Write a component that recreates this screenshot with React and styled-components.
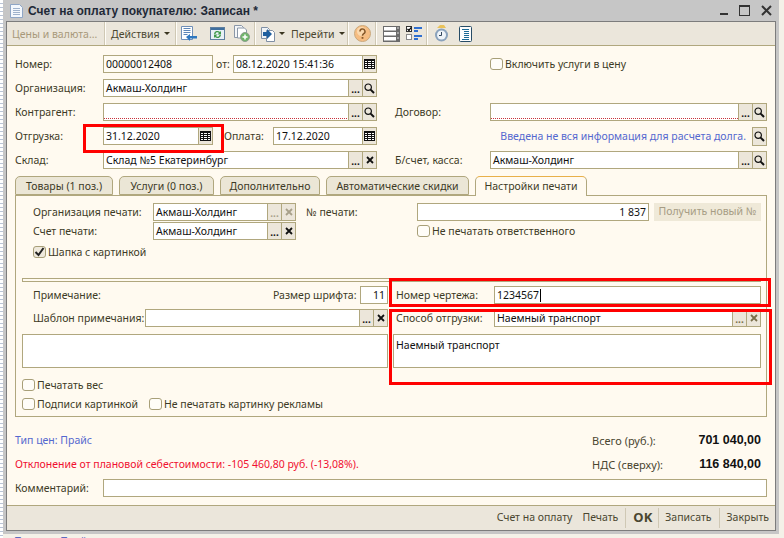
import React from "react";
import styled, { createGlobalStyle } from "styled-components";

const GlobalStyle = createGlobalStyle`
  html, body { margin: 0; padding: 0; background: #f4f1e8; }
  * { box-sizing: border-box; }
`;

const line = "#b0a77e";

const Screen = styled.div`
  width: 784px;
  height: 538px;
  overflow: hidden;
  padding-left: 3px;
  font-family: "Noto Sans", sans-serif;
  font-size: 10.5px;
  color: #3d3a26;
  background: repeating-linear-gradient(180deg, #fff 0 3px, #b9c4d6 3px 4px) 0 0 / 3px 100% no-repeat, #f4f1e8;
`;

const Window = styled.div`
  width: 776px;
  padding: 0 3px 3px;
  background: #c6c6c6;
`;

const TitleBar = styled.div`
  height: 21px;
  display: flex;
  align-items: center;
  padding: 0 3px 0 4px;
`;

const Title = styled.div`
  margin-left: 5px;
  font-family: "Liberation Sans", sans-serif;
  font-size: 12px;
  font-weight: 700;
  color: #1f2937;
`;

const WinControls = styled.div`
  margin-left: auto;
  display: flex;
  gap: 10px;
  align-items: center;
`;

const Content = styled.div`
  border: 1px solid #7c7c7c;
  background: #fffaf0;
`;

const Toolbar = styled.div`
  height: 24px;
  display: flex;
  align-items: center;
  background: #ebe6db;
  border-bottom: 1px solid ${line};
`;

const ToolGroup = styled.div`
  display: flex;
  align-items: center;
  flex: none;
  width: ${(p) => p.$w}px;
  height: 23px;
  padding-left: ${(p) => p.$pad || 6}px;
  gap: ${(p) => p.$gap || 0}px;
  border-right: 1px solid #cfc8b4;
  box-shadow: 1px 0 0 #fffdf8;
  &:last-child { border: 0; box-shadow: none; }
`;

const ToolGap = styled.span`
  flex: none;
  width: ${(p) => p.$w}px;
`;

const ToolText = styled.span`
  color: ${(p) => (p.$off ? "#a8997a" : "#4a4630")};
  white-space: nowrap;
`;

const Caret = styled.i`
  display: block;
  width: 0;
  height: 0;
  margin-left: ${(p) => p.$ml || 4}px;
  border: 3px solid transparent;
  border-top: 3px solid #3a3520;
  border-bottom: 0;
`;

const Form = styled.div`
  height: 459px;
  padding: 9px 8px 0;
`;

const Row = styled.div`
  position: relative;
  display: flex;
  align-items: center;
  height: ${(p) => p.$h || 18}px;
  margin-top: ${(p) => p.$mt ?? 6}px;
  &:first-child { margin-top: 0; }
`;

const Label = styled.span`
  flex: none;
  width: ${(p) => p.$w}px;
  padding-left: ${(p) => p.$pl || 0}px;
  margin-left: ${(p) => p.$ml || 0}px;
  white-space: nowrap;
`;

const RightGroup = styled.div`
  margin-left: auto;
  display: flex;
  align-items: center;
`;

const Field = styled.div`
  flex: none;
  display: flex;
  width: ${(p) => p.$w}px;
  height: 18px;
  margin-left: ${(p) => p.$ml || 0}px;
  border: 1px solid ${line};
  background: #fff;
`;

const FieldValue = styled.div`
  flex: 1;
  min-width: 0;
  padding: 0 2px;
  line-height: 16px;
  color: #111;
  white-space: nowrap;
  text-align: ${(p) => (p.$right ? "right" : "left")};
  background-color: ${(p) => (p.$cream ? "#fffcf4" : "#fff")};
  ${(p) =>
    p.$required &&
    `background-image: linear-gradient(90deg, #c8323c 50%, transparent 50%);
     background-size: 2px 1px;
     background-repeat: repeat-x;
     background-position: 0 calc(100% - 1px);`}
`;

const TextCaret = styled.i`
  display: inline-block;
  width: 1px;
  height: 13px;
  margin-left: 1px;
  vertical-align: -3px;
  background: #000;
`;

const FieldBtn = styled.div`
  flex: none;
  width: 14px;
  display: flex;
  align-items: center;
  justify-content: center;
  border-left: 1px solid ${line};
  background: #ece6da;
  color: ${(p) => p.$tone};
  font-weight: 700;
  font-size: 10px;
`;

const Dots = styled.span`
  line-height: 1;
  margin-top: 2px;
`;

const Tabs = styled.div`
  display: flex;
  gap: 6px;
  height: 19px;
  margin-top: 7px;
`;

const Tab = styled.div`
  flex: none;
  position: relative;
  z-index: ${(p) => (p.$active ? 1 : 0)};
  width: ${(p) => p.$w}px;
  height: ${(p) => (p.$active ? 20 : 19)}px;
  border: 1px solid ${line};
  border-bottom: ${(p) => (p.$active ? 0 : `1px solid ${line}`)};
  border-top-color: ${(p) => (p.$active ? "#e8b04a" : line)};
  border-radius: 5px 5px 0 0;
  background: ${(p) => (p.$active ? "#fffaf0" : "#ebe6d6")};
  text-align: center;
  line-height: 18px;
  white-space: nowrap;
`;

const Panel = styled.div`
  position: relative;
  height: 222px;
  border: 1px solid ${line};
  padding: 7px 5px 0 6px;
`;

const IndentRow = styled(Row)`
  padding-left: 11px;
`;

const GhostButton = styled.div`
  flex: none;
  width: 107px;
  height: 18px;
  margin-left: 5px;
  background: #efe9d8;
  color: #a69c84;
  text-align: center;
  line-height: 17px;
  white-space: nowrap;
`;

const Separator = styled.div`
  height: 4px;
  margin-top: ${(p) => p.$mt || 0}px;
  border: 1px solid ${line};
`;

const Check = styled.label`
  display: flex;
  align-items: center;
  flex: none;
  margin-left: ${(p) => p.$ml || 0}px;
  white-space: nowrap;
`;

const CheckBox = styled.span`
  flex: none;
  display: flex;
  align-items: center;
  justify-content: center;
  width: 13px;
  height: 12px;
  margin-right: 2px;
  border: 1px solid #a89f78;
  border-radius: 3px;
  background: ${(p) => (p.$on ? "#efe9dc" : "#fffdf8")};
`;

const TextArea = styled.div`
  flex: none;
  width: ${(p) => p.$w}px;
  height: 34px;
  margin-left: ${(p) => p.$ml || 0}px;
  padding: 3px 2px;
  border: 1px solid ${line};
  background: #fff;
  color: #111;
`;

const Marker = styled.div`
  position: absolute;
  left: ${(p) => p.$l}px;
  top: ${(p) => p.$t}px;
  width: ${(p) => p.$w}px;
  height: ${(p) => p.$h}px;
  border: 3px solid #f00;
  pointer-events: none;
  z-index: 2;
`;

const InfoText = styled.span`
  color: ${(p) => p.$color};
  white-space: nowrap;
`;

const IconButton = styled.div`
  flex: none;
  width: 15px;
  height: 19px;
  margin-left: 6px;
  display: flex;
  align-items: center;
  justify-content: center;
  border: 1px solid ${line};
  background: #ece6da;
`;

const Total = styled.div`
  margin-left: auto;
  display: flex;
  align-items: center;
  width: 169px;
  margin-right: 6px;
  font-size: 11px;
  color: #4a4630;
`;

const TotalValue = styled.b`
  margin-left: auto;
  font-family: "Liberation Sans", sans-serif;
  font-size: 12.5px;
  color: #111;
`;

const Footer = styled.div`
  height: 25px;
  display: flex;
  align-items: center;
  justify-content: flex-end;
  border-top: 1px solid ${line};
  background: #ebe6db;
`;

const FootBtn = styled.div`
  flex: none;
  padding: 0 ${(p) => p.$pr ?? 7}px 0 ${(p) => p.$pl ?? 7}px;
  height: 20px;
  line-height: 19px;
  color: #4a4630;
  font-weight: ${(p) => (p.$bold ? 700 : 400)};
  font-size: ${(p) => (p.$bold ? 13 : 10.5)}px;
  border-left: ${(p) => (p.$sep ? "1px solid #cfc8b4" : 0)};
`;

const Behind = styled.div`
  padding-left: 12px;
  color: #5c6bc0;
  line-height: 14px;
`;

const CalendarIcon = () => (
  <svg width="11" height="10" viewBox="0 0 11 10">
    <rect x="0" y="0" width="11" height="10" fill="#111" />
    <path d="M1 2h2v1H1zM4 2h3v1H4zM8 2h2v1H8zM1 4h2v1H1zM4 4h3v1H4zM8 4h2v1H8zM1 6h2v1H1zM4 6h3v1H4zM8 6h2v1H8zM1 8h2v1H1zM4 8h3v1H4zM8 8h2v1H8z" fill="#fff" />
  </svg>
);

const SearchIcon = () => (
  <svg width="11" height="11" viewBox="0 0 11 11" fill="none" stroke="#111">
    <circle cx="4.2" cy="4.2" r="3.2" strokeWidth="1.2" />
    <path d="M6.6 6.6L10 10" strokeWidth="2" />
  </svg>
);

const ClearIcon = ({ color }) => (
  <svg width="8" height="8" viewBox="0 0 8 8" stroke={color} strokeWidth="1.8">
    <path d="M1 1l6 6M7 1L1 7" />
  </svg>
);

const CheckMark = () => (
  <svg width="11" height="10" viewBox="0 0 11 10" fill="none" stroke="#222" strokeWidth="2">
    <path d="M1.5 5l3 3 5-7" />
  </svg>
);

const DocIcon = () => (
  <svg width="13" height="14" viewBox="0 0 13 14">
    <path d="M.5.5h9l3 3v10H.5z" fill="#f4f8fd" stroke="#8fa6c6" />
    <path d="M3 4.500h7M3 6.500h7M3 8.500h7M3 10.500h7" stroke="#9fb2cc" />
  </svg>
);

const WinButtons = () => (
  <WinControls>
    <svg width="9" height="11" viewBox="0 0 9 11"><rect x="0" y="8" width="8" height="2" fill="#333" /></svg>
    <svg width="12" height="11" viewBox="0 0 12 11" fill="none" stroke="#333"><rect x=".5" y="1" width="10" height="9.5" /><path d="M0 1h11" strokeWidth="2" /></svg>
    <svg width="12" height="11" viewBox="0 0 12 11" fill="none" stroke="#333" strokeWidth="2"><path d="M1 1l9 9M10 1l-9 9" /></svg>
  </WinControls>
);

const BackDocIcon = () => (
  <svg width="17" height="16" viewBox="0 0 17 16">
    <path d="M.5.5h11v13H.5z" fill="#fff" stroke="#6f8fb8" />
    <path d="M2.500 2.500h7M2.500 4.500h7M2.500 6.500h7M2.500 8.500h4" stroke="#5d86b8" />
    <path d="M5 11l4-3v2h7v2.500H9V15z" fill="#2f78c0" />
  </svg>
);

const RefreshIcon = () => (
  <svg width="15" height="15" viewBox="0 0 15 15">
    <rect x=".5" y="1.500" width="14" height="12" fill="#e8f0f6" stroke="#5f7f9f" />
    <rect x="1" y="2" width="13" height="2" fill="#3f6f9f" />
    <path d="M4 8a3.500 3.500 0 0 1 6-2l1-1v3.500H7.500L9 7a2 2 0 0 0-3.500 1zM11 9a3.500 3.500 0 0 1-6 2l-1 1V8.500h3.500L6 10a2 2 0 0 0 3.500-1z" fill="#3f9a4a" />
  </svg>
);

const CopyAddIcon = () => (
  <svg width="16" height="17" viewBox="0 0 16 17">
    <path d="M.5.5h7l2 2v10H.5z" fill="#f4f6f8" stroke="#8a97a8" />
    <path d="M3.500 3h7l2 2v8h-9z" fill="#fff" stroke="#8a97a8" />
    <circle cx="11" cy="12" r="4.500" fill="#6fb56a" stroke="#8f9f90" />
    <path d="M11 9.500v5M8.500 12h5" stroke="#fff" strokeWidth="1.500" />
  </svg>
);

const GoIcon = () => (
  <svg width="17" height="17" viewBox="0 0 17 17">
    <path d="M.5 2.500h6l2 2v9H.5z" fill="#eef2f6" stroke="#7f8fa4" />
    <path d="M5.500 5.500h6l2 2v9h-8z" fill="#fff" stroke="#7f8fa4" />
    <path d="M2 7h4V4l5 5-5 5v-3H2z" fill="#1f5f9f" />
  </svg>
);

const HelpIcon = () => (
  <svg width="17" height="17" viewBox="0 0 17 17">
    <circle cx="8.500" cy="8.500" r="8" fill="#f6bd82" stroke="#c9a87c" />
    <circle cx="7.500" cy="6.500" r="4.500" fill="#fbd9ae" />
    <path d="M6 6.500a2.500 2.500 0 1 1 3.700 2.200c-.8.500-1.200 1-1.200 2" fill="none" stroke="#8a5a2a" strokeWidth="1.600" />
    <rect x="7.600" y="12" width="1.800" height="1.800" fill="#8a5a2a" />
  </svg>
);

const ListIcon = () => (
  <svg width="17" height="16" viewBox="0 0 17 16">
    <path d="M0 0h17v16H0z" fill="#6b6b6b" />
    <path d="M1 1h12v3.500H1zM1 6h12v3.500H1zM1 11h12v3.500H1z" fill="#fff" />
    <path d="M14 1.500h2v1h-2zM14 6.500h2v1h-2zM14 11.500h2v1h-2z" fill="#ddd" />
  </svg>
);

const ChecksIcon = () => (
  <svg width="17" height="15" viewBox="0 0 17 15">
    <rect x=".5" y=".5" width="5" height="5" fill="#fff" stroke="#333" />
    <path d="M1.500 3l1.500 1.500L5 1.500" fill="none" stroke="#000" strokeWidth="1.300" />
    <rect x=".5" y="8.500" width="5" height="5" fill="#fff" stroke="#8a8a8a" />
    <path d="M8 1h8v2H8zM8 4h4v2H8zM8 9h8v2H8zM8 12h4v2H8z" fill="#2f6fd0" />
  </svg>
);

const ClockIcon = () => (
  <svg width="15" height="17" viewBox="0 0 15 17">
    <path d="M3 3l3-3h4l2 3z" fill="#e9c25a" />
    <circle cx="7.500" cy="10" r="6.500" fill="#8aa2bc" />
    <circle cx="7.500" cy="10" r="4.500" fill="#eef3f8" />
    <path d="M7.500 7v3.500H5" fill="none" stroke="#33465c" />
  </svg>
);

const SheetIcon = () => (
  <svg width="13" height="16" viewBox="0 0 13 16">
    <rect x=".5" y=".5" width="12" height="15" rx="1" fill="#fdfdfd" stroke="#274c66" />
    <path d="M3 3.500h7M5 5.500h5M5 7.500h5M5 9.500h5M5 11.500h5M3 13.500h7" stroke="#1c6a96" />
  </svg>
);

// поле с кнопками выбора справа
const PickField = ({ w, ml, value, required, cream, right, tone = "#111", buttons = [], children }) => (
  <Field $w={w} $ml={ml}>
    <FieldValue $required={required} $cream={cream} $right={right}>
      {value}
      {children}
    </FieldValue>
    {buttons.map((b, i) => (
      <FieldBtn key={i} $tone={tone}>
        {b === "dots" && <Dots>...</Dots>}
        {b === "search" && <SearchIcon />}
        {b === "clear" && <ClearIcon color={tone} />}
        {b === "cal" && <CalendarIcon />}
      </FieldBtn>
    ))}
  </Field>
);

const Flag = ({ on, ml, children }) => (
  <Check $ml={ml}>
    <CheckBox $on={on}>{on && <CheckMark />}</CheckBox>
    {children}
  </Check>
);

export default function App() {
  return (
    <Screen>
      <GlobalStyle />
      <Window>
        <TitleBar>
          <DocIcon />
          <Title>Счет на оплату покупателю: Записан *</Title>
          <WinButtons />
        </TitleBar>
        <Content>
          <Toolbar>
            <ToolGroup $w={98} $pad={5}><ToolText $off>Цены и валюта...</ToolText></ToolGroup>
            <ToolGroup $w={71}>
              <ToolText>Действия</ToolText>
              <Caret />
            </ToolGroup>
            <ToolGroup $w={79} $pad={5}>
              <BackDocIcon />
              <ToolGap $w={12} />
              <RefreshIcon />
              <ToolGap $w={9} />
              <CopyAddIcon />
            </ToolGroup>
            <ToolGroup $w={93}>
              <GoIcon />
              <Caret $ml={1} />
              <ToolGap $w={6} />
              <ToolText>Перейти</ToolText>
              <Caret />
            </ToolGroup>
            <ToolGroup $w={28} $pad={6}><HelpIcon /></ToolGroup>
            <ToolGroup $w={51} $pad={7} $gap={6}>
              <ListIcon />
              <ChecksIcon />
            </ToolGroup>
            <ToolGroup $w={50} $pad={7} $gap={10}>
              <ClockIcon />
              <SheetIcon />
            </ToolGroup>
          </Toolbar>

          <Form>
            <Row>
              <Label $w={88}>Номер:</Label>
              <PickField w={110} value="00000012408" cream />
              <Label $w={20} $pl={3}>от:</Label>
              <PickField w={144} value="08.12.2020 15:41:36" buttons={["cal"]} />
              <Flag ml={113}>Включить услуги в цену</Flag>
            </Row>
            <Row>
              <Label $w={88}>Организация:</Label>
              <PickField w={274} value="Акмаш-Холдинг" buttons={["dots", "search"]} />
            </Row>
            <Row>
              <Label $w={88}>Контрагент:</Label>
              <PickField w={274} required buttons={["dots", "search"]} />
              <RightGroup>
                <Label $w={95}>Договор:</Label>
                <PickField w={277} required buttons={["dots", "search"]} />
              </RightGroup>
            </Row>
            <Row>
              <Label $w={88}>Отгрузка:</Label>
              <PickField w={110} value="31.12.2020" buttons={["cal"]} />
              <Label $w={60} $pl={11}>Оплата:</Label>
              <PickField w={104} value="17.12.2020" buttons={["cal"]} />
              <RightGroup>
                <InfoText $color="#5468cf">Введена не вся информация для расчета долга.</InfoText>
                <IconButton><SearchIcon /></IconButton>
              </RightGroup>
              <Marker $l={68} $t={-3} $w={141} $h={29} />
            </Row>
            <Row>
              <Label $w={88}>Склад:</Label>
              <PickField w={274} value="Склад №5 Екатеринбург" buttons={["dots", "clear"]} />
              <RightGroup>
                <Label $w={95}>Б/счет, касса:</Label>
                <PickField w={277} value="Акмаш-Холдинг" buttons={["dots", "search"]} />
              </RightGroup>
            </Row>

            <Tabs>
              <Tab $w={98}>Товары (1 поз.)</Tab>
              <Tab $w={95}>Услуги (0 поз.)</Tab>
              <Tab $w={100}>Дополнительно</Tab>
              <Tab $w={143}>Автоматические скидки</Tab>
              <Tab $w={112} $active>Настройки печати</Tab>
            </Tabs>
            <Panel>
              <IndentRow>
                <Label $w={120}>Организация печати:</Label>
                <PickField w={143} value="Акмаш-Холдинг" tone="#a8a08a" buttons={["dots", "clear"]} />
                <Label $w={111} $ml={10}>№ печати:</Label>
                <PickField w={232} right value="1 837" />
                <GhostButton>Получить новый №</GhostButton>
              </IndentRow>
              <IndentRow $mt={1}>
                <Label $w={120}>Счет печати:</Label>
                <PickField w={143} value="Акмаш-Холдинг" buttons={["dots", "clear"]} />
                <Flag ml={121}>Не печатать ответственного</Flag>
              </IndentRow>
              <IndentRow $mt={5} $h={14}>
                <Flag on>Шапка с картинкой</Flag>
              </IndentRow>
              <Separator $mt={19} />
              <IndentRow $mt={4}>
                <Label $w={240}>Примечание:</Label>
                <Label $w={87}>Размер шрифта:</Label>
                <PickField w={28} right value="11" />
                <Label $w={98} $ml={8}>Номер чертежа:</Label>
                <PickField w={267} value="1234567"><TextCaret /></PickField>
              </IndentRow>
              <IndentRow $mt={5}>
                <Label $w={112}>Шаблон примечания:</Label>
                <PickField w={243} buttons={["dots", "clear"]} />
                <Label $w={98} $ml={8}>Способ отгрузки:</Label>
                <PickField w={267} value="Наемный транспорт" tone="#7a6f4a" buttons={["dots", "clear"]} />
              </IndentRow>
              <Row $mt={7} $h={34}>
                <TextArea $w={366} />
                <TextArea $w={368} $ml={5}>Наемный транспорт</TextArea>
              </Row>
              <Row $mt={10} $h={13}>
                <Flag>Печатать вес</Flag>
              </Row>
              <Row $mt={6} $h={13}>
                <Flag>Подписи картинкой</Flag>
                <Flag ml={11}>Не печатать картинку рекламы</Flag>
              </Row>
              <Marker $l={373} $t={82} $w={382} $h={29} />
              <Marker $l={373} $t={113} $w={383} $h={76} />
            </Panel>

            <Row $mt={14}>
              <InfoText $color="#5468cf">Тип цен: Прайс</InfoText>
              <Total>
                Всего (руб.):
                <TotalValue>701 040,00</TotalValue>
              </Total>
            </Row>
            <Row>
              <InfoText $color="#f01030">Отклонение от плановой себестоимости: -105 460,80 руб. (-13,08%).</InfoText>
              <Total>
                НДС (сверху):
                <TotalValue>116 840,00</TotalValue>
              </Total>
            </Row>
            <Row>
              <Label $w={88}>Комментарий:</Label>
              <PickField w={664} />
            </Row>
          </Form>

          <Footer>
            <FootBtn>Счет на оплату</FootBtn>
            <FootBtn $pl={3}>Печать</FootBtn>
            <FootBtn $sep $bold $pr={6}>OK</FootBtn>
            <FootBtn $sep $pl={6}>Записать</FootBtn>
            <FootBtn $sep $pr={6}>Закрыть</FootBtn>
          </Footer>
        </Content>
      </Window>
      <Behind>Тип цен: Прайс</Behind>
    </Screen>
  );
}
